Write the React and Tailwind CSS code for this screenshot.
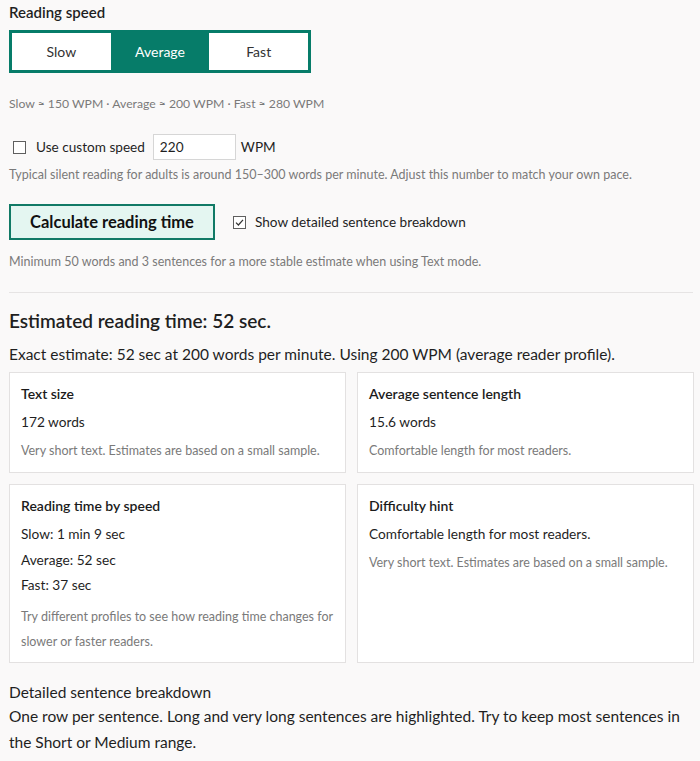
import React, { useState } from 'react';

const speeds = ['Slow', 'Average', 'Fast'];

const Box = ({ checked }) => (
  <span className="inline-flex items-center justify-center w-[13px] h-[13px] border border-[#5f5f5f] bg-white">
    {checked && (
      <svg width="9" height="9" viewBox="0 0 9 9" fill="none">
        <path d="M1 4.6 L3.4 7 L8 1.8" stroke="#333" strokeWidth="1.2" />
      </svg>
    )}
  </span>
);

const Card = ({ title, children }) => (
  <div className="bg-white border border-[#e3e1e1] px-[11px] pt-[12px] pb-[13px]">
    <div className="text-[14px] font-semibold text-[#1b1b1b] leading-[18px]">{title}</div>
    {children}
  </div>
);

const App = () => {
  const [speed, setSpeed] = useState('Average');
  const [custom, setCustom] = useState(false);
  const [detail, setDetail] = useState(true);

  return (
    <div className="min-h-[761px] bg-[#faf9f9] px-[9px] pt-[2px] text-[#1f1f1f]" style={{ fontFamily: '"Lato", "Noto Sans", sans-serif' }}>
      <h3 className="text-[15px] font-semibold leading-[20px]">Reading speed</h3>

      <div className="mt-[8px] flex w-[302px] h-[43px] border-[3px] border-[#067c69]">
        {speeds.map((s) => (
          <button
            key={s}
            onClick={() => setSpeed(s)}
            className={
              s === speed
                ? 'flex-1 bg-[#067c69] text-white text-[14px]'
                : 'flex-1 bg-white text-[#333] text-[14px]'
            }
          >
            {s}
          </button>
        ))}
      </div>

      <p className="mt-[23px] text-[12.2px] text-[#7a7a7a] leading-[16px]">
        Slow ≈ 150 WPM · Average ≈ 200 WPM · Fast ≈ 280 WPM
      </p>

      <div className="mt-[22px] flex items-center h-[26px]">
        <button onClick={() => setCustom(!custom)} className="ml-[4px] flex">
          <Box checked={custom} />
        </button>
        <span className="ml-[10px] text-[13.6px]">Use custom speed</span>
        <input
          type="text"
          defaultValue="220"
          className="ml-[8px] w-[83px] h-[26px] border border-[#d6d6d6] bg-white px-[6px] text-[13.6px]"
        />
        <span className="ml-[5px] text-[13.6px]">WPM</span>
      </div>
      <p className="mt-[7px] text-[12.5px] text-[#7a7a7a] leading-[16px]">
        Typical silent reading for adults is around 150–300 words per minute. Adjust this number to match your own pace.
      </p>

      <div className="mt-[21px] flex items-center">
        <button className="w-[206px] h-[36px] border-[2px] border-[#117a66] bg-[#e4f6f1] text-[16.5px] font-bold text-[#111]">
          Calculate reading time
        </button>
        <button onClick={() => setDetail(!detail)} className="ml-[18px] flex">
          <Box checked={detail} />
        </button>
        <span className="ml-[9px] text-[13.6px]">Show detailed sentence breakdown</span>
      </div>
      <p className="mt-[14px] text-[12.5px] text-[#7a7a7a] leading-[16px]">
        Minimum 50 words and 3 sentences for a more stable estimate when using Text mode.
      </p>

      <hr className="mt-[22px] mr-[-2px] border-t border-[#e6e4e4]" />

      <h2 className="mt-[16px] text-[19px] font-semibold leading-[24px]">Estimated reading time: 52 sec.</h2>
      <p className="mt-[11px] text-[15.5px] leading-[20px]">
        Exact estimate: 52 sec at 200 words per minute. Using 200 WPM (average reader profile).
      </p>

      <div className="mt-[8px] grid grid-cols-2 gap-[11px] mr-[-3px]">
        <Card title="Text size">
          <div className="mt-[10px] text-[13.7px] leading-[18px]">172 words</div>
          <div className="mt-[12px] text-[12.5px] text-[#7a7a7a] leading-[16px]">Very short text. Estimates are based on a small sample.</div>
        </Card>
        <Card title="Average sentence length">
          <div className="mt-[10px] text-[13.7px] leading-[18px]">15.6 words</div>
          <div className="mt-[12px] text-[12.5px] text-[#7a7a7a] leading-[16px]">Comfortable length for most readers.</div>
        </Card>
        <Card title="Reading time by speed">
          <div className="mt-[10px] text-[13.7px] leading-[18px]">Slow: 1 min 9 sec</div>
          <div className="mt-[8px] text-[13.7px] leading-[18px]">Average: 52 sec</div>
          <div className="mt-[7px] text-[13.7px] leading-[18px]">Fast: 37 sec</div>
          <div className="mt-[10px] mb-[-5px] text-[12.5px] text-[#7a7a7a] leading-[25px]">
            Try different profiles to see how reading time changes for slower or faster readers.
          </div>
        </Card>
        <Card title="Difficulty hint">
          <div className="mt-[10px] text-[13.7px] leading-[18px]">Comfortable length for most readers.</div>
          <div className="mt-[12px] text-[12.5px] text-[#7a7a7a] leading-[16px]">Very short text. Estimates are based on a small sample.</div>
        </Card>
      </div>

      <div className="mt-[18px] text-[15.5px] leading-[22px]">Detailed sentence breakdown</div>
      <p className="text-[15.5px] leading-[26px]">
        One row per sentence. Long and very long sentences are highlighted. Try to keep most sentences in the Short or Medium range.
      </p>
    </div>
  );
};

export default App;
